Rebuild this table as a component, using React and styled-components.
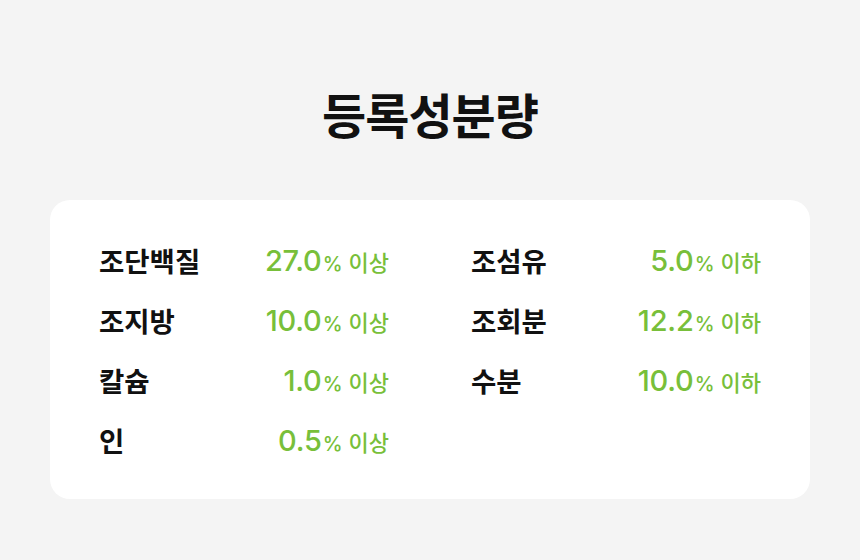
import styled, { createGlobalStyle } from 'styled-components';

const GlobalStyle = createGlobalStyle`
  html, body {
    margin: 0;
    padding: 0;
    background: #f4f4f4;
  }
  body {
    font-family: 'Noto Sans CJK KR', 'Noto Sans', sans-serif;
  }
`;

const Page = styled.div`
  width: 860px;
  height: 560px;
  box-sizing: border-box;
  padding: 78px 50px 0;
  display: flex;
  flex-direction: column;
  align-items: center;
`;

const Title = styled.h1`
  margin: 0;
  font-size: 48px;
  font-weight: 700;
  line-height: 70px;
  color: #111;
  letter-spacing: -1px;
`;

const Card = styled.div`
  margin-top: 52px;
  width: 100%;
  box-sizing: border-box;
  background: #fff;
  border-radius: 20px;
  padding: 30px 49px 29px;
  display: grid;
  grid-template-columns: 290px 290px;
  column-gap: 82px;
  grid-auto-rows: 60px;
`;

const Row = styled.div`
  display: flex;
  align-items: center;
  justify-content: space-between;
`;

const Label = styled.span`
  font-size: 27.5px;
  font-weight: 700;
  color: #111;
`;

const Value = styled.span`
  color: #78bf3a;
  display: flex;
  align-items: baseline;
`;

const Num = styled.span`
  font-family: Inter, 'Noto Sans', sans-serif;
  font-size: 29px;
  font-weight: 500;
  letter-spacing: -0.2px;
`;

const Pct = styled.span`
  font-family: Inter, 'Noto Sans', sans-serif;
  font-size: 20px;
  font-weight: 500;
  margin-left: 1px;
`;

const Cond = styled.span`
  font-size: 22px;
  font-weight: 500;
  margin-left: 6px;
`;

const rows = [
  ['조단백질', '27.0', '이상'],
  ['조섬유', '5.0', '이하'],
  ['조지방', '10.0', '이상'],
  ['조회분', '12.2', '이하'],
  ['칼슘', '1.0', '이상'],
  ['수분', '10.0', '이하'],
  ['인', '0.5', '이상'],
];

export default function App() {
  return (
    <>
      <GlobalStyle />
      <Page>
        <Title>등록성분량</Title>
        <Card>
          {rows.map(([label, num, cond]) => (
            <Row key={label}>
              <Label>{label}</Label>
              <Value>
                <Num>{num}</Num>
                <Pct>%</Pct>
                <Cond>{cond}</Cond>
              </Value>
            </Row>
          ))}
        </Card>
      </Page>
    </>
  );
}
